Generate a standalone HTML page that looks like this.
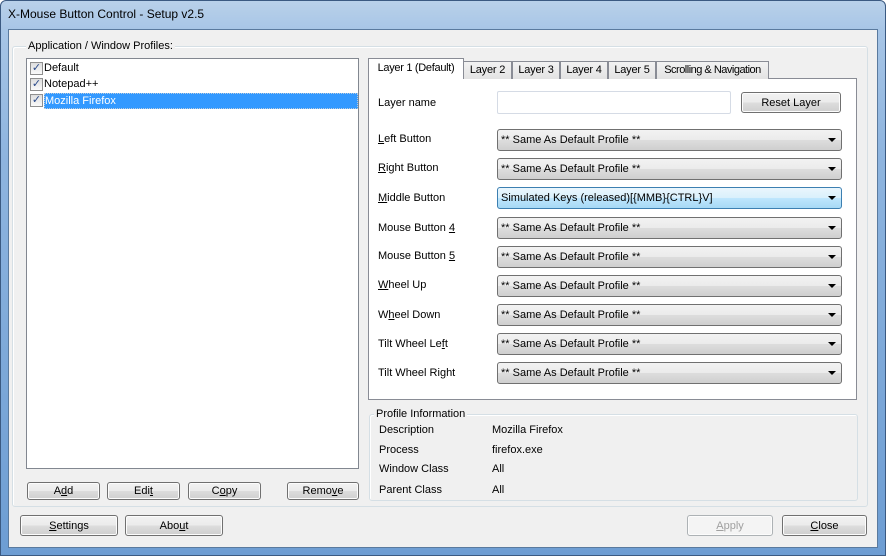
<!DOCTYPE html>
<html><head><style>
*{box-sizing:border-box;margin:0;padding:0}
body{width:886px;height:556px;overflow:hidden;background:#fff;font-family:"Liberation Sans",sans-serif;font-size:11px;color:#000;position:relative;white-space:nowrap}
.frame{position:absolute;left:0;top:0;width:886px;height:556px;border-radius:6px 6px 0 0;background:linear-gradient(180deg,#b9d1ea 0,#a7c5e6 30px,#8fb5df 150px,#6d9dd3 556px);border:1px solid #3b5a82}
.title{position:absolute;left:8px;top:7px;font-size:12px;color:#000}
.client{position:absolute;left:8px;top:29px;width:870px;height:519px;background:#f0f0f0;border:1px solid #5a7a9e}
.a{position:absolute}
.gb{position:absolute;border:1px solid #d5dfe5;border-radius:3px;box-shadow:inset 1px 1px 0 #fff}
.gl{position:absolute;background:#f0f0f0;padding:0 2px;color:#000}
.btn{position:absolute;border:1px solid #707070;border-radius:3px;background:linear-gradient(#f2f2f2 0,#ebebeb 50%,#dddddd 51%,#cfcfcf 100%);text-align:center;font-size:11px;box-shadow:inset 0 0 0 1px #fcfcfc}
.sm{height:18px;line-height:16px}
.cb{position:absolute;left:497px;width:345px;height:22px;border:1px solid #707070;border-radius:3px;background:linear-gradient(#f2f2f2 0,#ebebeb 50%,#dddddd 51%,#cfcfcf 100%);padding:4px 0 0 3px;font-size:11px}
.cb:after{content:"";position:absolute;right:5px;top:8px;border-left:4px solid transparent;border-right:4px solid transparent;border-top:4px solid #000}
.lbl{position:absolute;left:378px}
.tab{position:absolute;top:61px;height:18px;border:1px solid #898c95;border-bottom:none;background:linear-gradient(#f2f2f2,#e3e3e3);padding:2px 0 0;text-align:center;font-size:11px;letter-spacing:-0.2px}
.chk{position:absolute;left:3px;width:13px;height:13px;border:1px solid #8f8f8f;background:linear-gradient(#dedede,#fafafa);color:#2b4a8a;font-size:11px;line-height:11px;text-align:center}
u{text-decoration:underline}
</style></head><body>
<div class="frame"></div>
<div class="title">X-Mouse Button Control - Setup v2.5</div>
<div class="client"></div>

<div class="gb" style="left:12px;top:46px;width:856px;height:461px"></div>
<div class="gl" style="left:26px;top:40px">Application / Window Profiles:</div>

<div class="a" style="left:26px;top:58px;width:333px;height:411px;background:#fff;border:1px solid #828790">
  <div class="a" style="left:0;top:2px;width:331px;height:16px"><div class="chk" style="top:1px">✓</div><span class="a" style="left:17px;top:1px">Default</span></div>
  <div class="a" style="left:0;top:18px;width:331px;height:16px"><div class="chk" style="top:1px">✓</div><span class="a" style="left:17px;top:1px">Notepad++</span></div>
  <div class="a" style="left:0;top:34px;width:331px;height:16px"><div class="chk" style="top:1px">✓</div><div class="a" style="left:17px;top:0;width:314px;height:16px;background:#3399ff;color:#fff;padding:1px 0 0 0;border:1px dotted #bcd">Mozilla Firefox</div></div>
</div>

<div class="btn sm" style="left:27px;top:482px;width:73px">A<u>d</u>d</div>
<div class="btn sm" style="left:107px;top:482px;width:73px">Edi<u>t</u></div>
<div class="btn sm" style="left:188px;top:482px;width:73px">C<u>o</u>py</div>
<div class="btn sm" style="left:287px;top:482px;width:72px">Remo<u>v</u>e</div>

<div class="a" style="left:368px;top:78px;width:489px;height:322px;background:#fff;border:1px solid #898c95"></div>
<div class="tab" style="left:463px;width:49px">Layer 2</div>
<div class="tab" style="left:512px;width:48px">Layer 3</div>
<div class="tab" style="left:560px;width:48px">Layer 4</div>
<div class="tab" style="left:608px;width:48px">Layer 5</div>
<div class="tab" style="left:656px;width:113px;letter-spacing:-0.5px">Scrolling &amp; Navigation</div>
<div class="tab" style="left:368px;top:58px;height:21px;width:96px;background:#fff;padding-top:3px;letter-spacing:-0.3px">Layer 1 (Default)</div>

<div class="lbl" style="top:97px">Layer name</div>
<div class="a" style="left:497px;top:91px;width:234px;height:23px;border:1px solid #d5dbe5;background:#fff;border-radius:2px"></div>
<div class="btn" style="left:741px;top:92px;width:100px;height:21px;padding-top:4px">Reset Layer</div>

<div class="lbl" style="top:133px"><u>L</u>eft Button</div><div class="cb" style="top:129px">** Same As Default Profile **</div>
<div class="lbl" style="top:162px"><u>R</u>ight Button</div><div class="cb" style="top:158px">** Same As Default Profile **</div>
<div class="lbl" style="top:192px"><u>M</u>iddle Button</div><div class="cb" style="top:187px;border-color:#3c7fb1;background:linear-gradient(#eaf6fd 0,#d9f0fc 50%,#bee6fd 51%,#a7d9f5 100%)">Simulated Keys (released)[{MMB}{CTRL}V]</div>
<div class="lbl" style="top:222px">Mouse Button <u>4</u></div><div class="cb" style="top:217px">** Same As Default Profile **</div>
<div class="lbl" style="top:250px">Mouse Button <u>5</u></div><div class="cb" style="top:246px">** Same As Default Profile **</div>
<div class="lbl" style="top:279px"><u>W</u>heel Up</div><div class="cb" style="top:275px">** Same As Default Profile **</div>
<div class="lbl" style="top:309px">W<u>h</u>eel Down</div><div class="cb" style="top:304px">** Same As Default Profile **</div>
<div class="lbl" style="top:338px">Tilt Wheel Le<u>f</u>t</div><div class="cb" style="top:333px">** Same As Default Profile **</div>
<div class="lbl" style="top:367px">Tilt Wheel Ri<u>g</u>ht</div><div class="cb" style="top:362px">** Same As Default Profile **</div>

<div class="gb" style="left:369px;top:414px;width:489px;height:87px"></div>
<div class="gl" style="left:374px;top:408px">Profile Information</div>
<div class="a" style="left:379px;top:424px">Description</div><div class="a" style="left:492px;top:424px">Mozilla Firefox</div>
<div class="a" style="left:379px;top:444px">Process</div><div class="a" style="left:492px;top:444px">firefox.exe</div>
<div class="a" style="left:379px;top:463px">Window Class</div><div class="a" style="left:492px;top:463px">All</div>
<div class="a" style="left:379px;top:484px">Parent Class</div><div class="a" style="left:492px;top:484px">All</div>

<div class="btn" style="left:20px;top:515px;width:98px;height:21px;padding-top:4px"><u>S</u>ettings</div>
<div class="btn" style="left:125px;top:515px;width:98px;height:21px;padding-top:4px">Abo<u>u</u>t</div>
<div class="btn" style="left:687px;top:515px;width:86px;height:21px;padding-top:4px;color:#a0a0a0;border-color:#adb2b5;background:#f4f4f4"><u>A</u>pply</div>
<div class="btn" style="left:782px;top:515px;width:85px;height:21px;padding-top:4px"><u>C</u>lose</div>
</body></html>
